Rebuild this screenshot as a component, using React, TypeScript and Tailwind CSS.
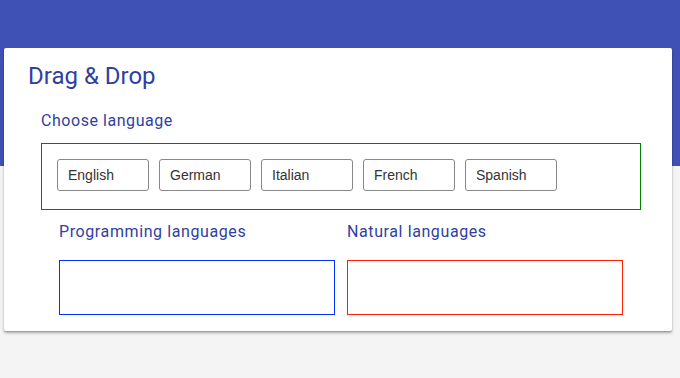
import React from "react";

const langs = ["English", "German", "Italian", "French", "Spanish"];

export default function App() {
  return (
    <div className="relative w-[680px] h-[378px] bg-[#f4f4f4] overflow-hidden" style={{ fontFamily: "Roboto, sans-serif" }}>
      <div className="h-[166px] bg-[#3f51b5]" />
      <div className="absolute left-[4px] top-[48px] w-[668px] h-[283px] bg-white rounded-[2px] shadow-[0_2px_3px_rgba(0,0,0,0.3),0_1px_1px_rgba(0,0,0,0.14)] pl-[24px] pt-[13px]">
        <h1 className="text-[24px] leading-[30px] text-[#303f9f] font-normal" style={{ fontFamily: "Roboto, sans-serif" }}>Drag &amp; Drop</h1>
        <div className="ml-[13px] mt-[20px] text-[16px] leading-[20px] tracking-[0.55px] text-[#303f9f]">Choose language</div>
        <div className="ml-[13px] mt-[12px] w-[600px] h-[67px] border border-[#008000] flex gap-[10px] pl-[15px] pt-[15px]">
          {langs.map((l) => (
            <div
              key={l}
              className="w-[92px] h-[32px] border border-[#888] rounded-[3px] flex items-center pl-[10px] text-[14px] text-[#333]"
              style={{ fontFamily: "'Liberation Sans', Arial, sans-serif" }}
            >
              {l}
            </div>
          ))}
        </div>
        <div className="ml-[31px] mt-[12px] flex gap-[12px]">
          <div className="w-[276px]">
            <div className="text-[16px] leading-[20px] tracking-[0.6px] text-[#303f9f]">Programming languages</div>
            <div className="mt-[18px] h-[55px] border border-[#0033ff]" />
          </div>
          <div className="w-[276px]">
            <div className="text-[16px] leading-[20px] tracking-[0.6px] text-[#303f9f]">Natural languages</div>
            <div className="mt-[18px] h-[55px] border border-[#ff2200]" />
          </div>
        </div>
      </div>
    </div>
  );
}
